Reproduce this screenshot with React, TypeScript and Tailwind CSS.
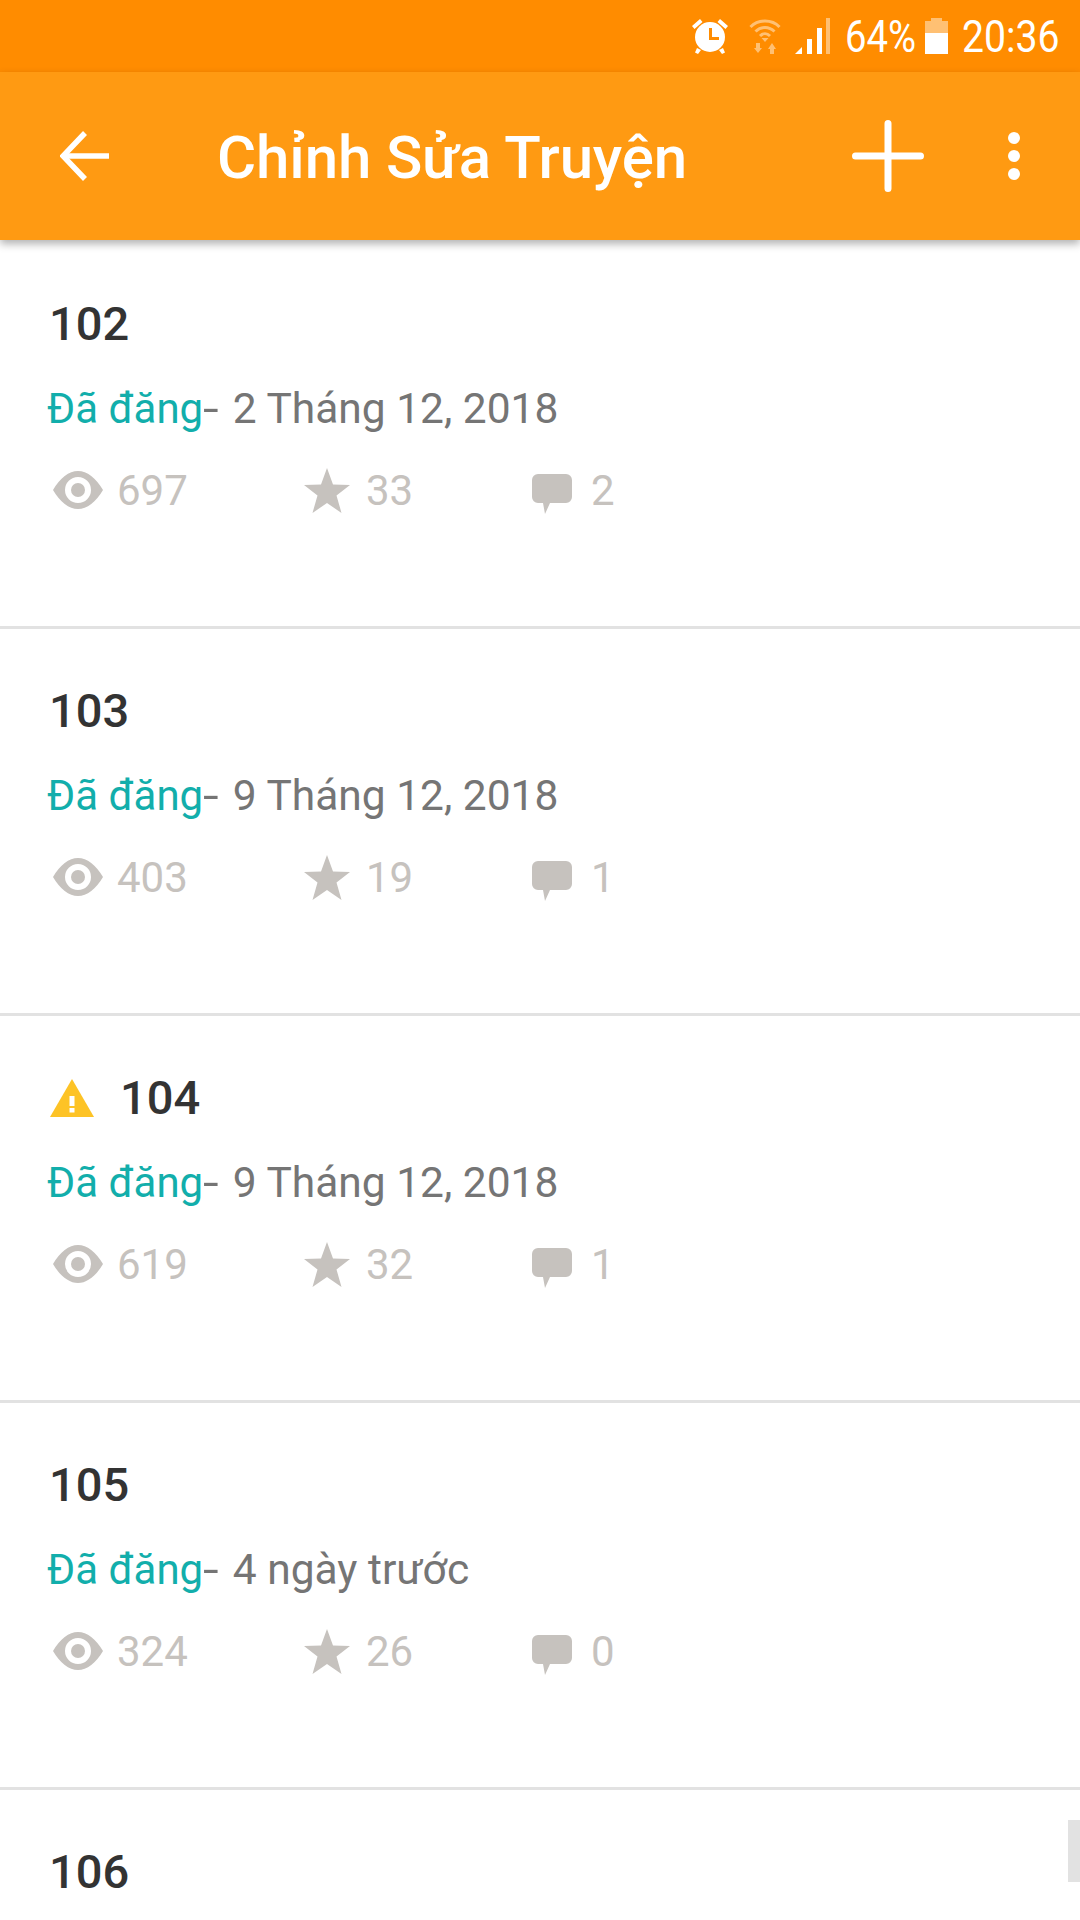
const parts = [
  { id: 102, views: 697, stars: 33, comments: 2, date: '2 Tháng 12, 2018' },
  { id: 103, views: 403, stars: 19, comments: 1, date: '9 Tháng 12, 2018' },
  { id: 104, views: 619, stars: 32, comments: 1, date: '9 Tháng 12, 2018', warning: true },
  { id: 105, views: 324, stars: 26, comments: 0, date: '4 ngày trước' },
  { id: 106 },
];

const AlarmIcon = () => (
  <svg width="36" height="36" viewBox="0 0 36 36" fill="white">
    <circle cx="18" cy="19" r="15" />
    <path d="M0 8 L8 1 L10.5 4 L2.5 11z M36 8 L28 1 L25.5 4 L33.5 11z M5 30 L9 32 L6 36 L3 34.5z M31 30 L27 32 L30 36 L33 34.5z" />
    <path d="M17 10 H20 V19 H27 V22 H17z" fill="#ff8c00" />
  </svg>
);

const WifiIcon = () => (
  <svg width="32" height="36" viewBox="0 0 32 36" fill="none" stroke="white" opacity="0.45">
    <path d="M1.5 9 C9 1 23 1 30.5 9" strokeWidth="3" />
    <path d="M6.5 13.5 C12 8 20 8 25.5 13.5" strokeWidth="3" />
    <path d="M11 18 C14 15 18 15 21 18" strokeWidth="3" />
    <path d="M16 24 L12.5 20 H19.5z M5 30 L9 35 L13 30z M19 31 L23 25 L27 31z" fill="white" stroke="none" />
    <rect x="7" y="25" width="4" height="6" fill="white" stroke="none" />
    <rect x="21" y="30" width="4" height="6" fill="white" stroke="none" />
  </svg>
);

const SignalIcon = () => (
  <svg width="36" height="36" viewBox="0 0 36 36" fill="white">
    <path d="M0 36 L7 29 V36z" />
    <rect x="12" y="21" width="5" height="15" />
    <rect x="22" y="10" width="5" height="26" />
    <rect x="31" y="0" width="4" height="36" opacity="0.45" />
  </svg>
);

const BatteryIcon = () => (
  <svg width="23" height="36" viewBox="0 0 23 36" fill="white">
    <path d="M6 0 H17 V3 H23 V15 H0 V3 H6z" opacity="0.45" />
    <rect x="0" y="15" width="23" height="21" />
  </svg>
);

const BackArrow = () => (
  <svg width="50" height="50" viewBox="0 0 50 50" fill="none" stroke="white" strokeWidth="5.5">
    <path d="M3 25 H49" />
    <path d="M25 2 L3 25 L25 48" />
  </svg>
);

const PlusIcon = () => (
  <svg width="72" height="72" viewBox="0 0 72 72" stroke="white" strokeWidth="7" strokeLinecap="round">
    <path d="M36 3.5 V68.5 M3.5 36 H68.5" />
  </svg>
);

const MoreIcon = () => (
  <svg width="12" height="48" viewBox="0 0 12 48" fill="white">
    <circle cx="6" cy="6" r="6" />
    <circle cx="6" cy="24" r="6" />
    <circle cx="6" cy="42" r="6" />
  </svg>
);

const EyeIcon = () => (
  <svg width="50" height="38" viewBox="0 0 50 38" fill="#c6c2be">
    <path
      fillRule="evenodd"
      d="M0 19 C7 7 16 0 25 0 S43 7 50 19 C43 31 34 38 25 38 S7 31 0 19z M25 6 A13 13 0 1 0 25 32 A13 13 0 1 0 25 6z"
    />
    <circle cx="25" cy="19" r="7" />
  </svg>
);

const StarIcon = () => (
  <svg width="46" height="45" viewBox="0 0 46 45" fill="#c6c2be">
    <path d="M23 0 L29 16.5 L46 17 L32.5 27.5 L37.5 45 L23 35 L8.5 45 L13.5 27.5 L0 17 L17 16.5z" />
  </svg>
);

const CommentIcon = () => (
  <svg width="40" height="40" viewBox="0 0 40 40" fill="#c6c2be" className="mt-[8px]">
    <path d="M6 0 H34 A6 6 0 0 1 40 6 V23 A6 6 0 0 1 34 29 H18 L13 40 L11 29 H6 A6 6 0 0 1 0 23 V6 A6 6 0 0 1 6 0z" />
  </svg>
);

const WarningIcon = () => (
  <svg width="44" height="38" viewBox="0 0 44 38">
    <path d="M22 0 L44 38 H0z" fill="#fdc326" />
    <rect x="19.5" y="17" width="5" height="10" fill="white" />
    <rect x="19.5" y="29" width="5" height="4.5" fill="white" />
  </svg>
);

const StatusBar = () => (
  <div className="h-[72px] bg-[#ff8c00] flex items-center justify-end pr-[22px] text-white text-[44px] leading-none">
    <AlarmIcon />
    <span className="ml-[21px]"><WifiIcon /></span>
    <span className="ml-[14px]"><SignalIcon /></span>
    <span className="ml-[14px] mt-[2px] w-[71px] origin-left scale-x-[0.87] whitespace-nowrap">64%</span>
    <span className="ml-[9px]"><BatteryIcon /></span>
    <span className="ml-[14px] mt-[2px] w-[96px] origin-left scale-x-[0.89] whitespace-nowrap">20:36</span>
  </div>
);

const Toolbar = () => (
  <div className="relative z-10 h-[168px] bg-[#ff9a12] flex items-center text-white shadow-[0_4px_8px_rgba(0,0,0,0.3)]">
    <span className="ml-[60px]"><BackArrow /></span>
    <h1 className="ml-[107px] mt-[3px] w-[470px] text-[60px] font-medium leading-none tracking-[-0.15px] whitespace-nowrap">
      Chỉnh Sửa Truyện
    </h1>
    <span className="ml-[165px]"><PlusIcon /></span>
    <span className="ml-[84px]"><MoreIcon /></span>
  </div>
);

const Stat = ({ icon, value, className, gap }: { icon: React.ReactNode; value?: number; className: string; gap: string }) => (
  <div className={`flex items-center ${className}`}>
    {icon}
    <span className={gap}>{value}</span>
  </div>
);

export default function App() {
  return (
    <div className="relative h-[1920px] w-[1080px] overflow-hidden bg-white font-['Roboto',sans-serif]">
      <StatusBar />
      <Toolbar />
      <div className="mt-[2px]">
        {parts.map((part) => (
          <div key={part.id} className="h-[387px] border-b-[3px] border-[#e2e2e2] pl-[48px] pt-[54px]">
            <div className="flex items-center h-[56px] pl-[1px] text-[47px] font-medium text-[#333333]">
              {part.warning && (
                <span className="ml-[1px] mr-[26px]"><WarningIcon /></span>
              )}
              {part.id}
            </div>
            {part.date && (
              <>
                <div className="mt-[32px] -ml-[1px] h-[50px] text-[42px] leading-[50px] text-[#757575] whitespace-nowrap">
                  <span className="text-[#12aeab]">Đã đăng</span>
                  <span className="inline-block origin-left scale-x-[1.35]">-</span>
                  <span className="ml-[18px] text-[42.5px]">{part.date}</span>
                </div>
                <div className="mt-[31px] flex items-center h-[50px] text-[42px] text-[#c6c2be]">
                  <Stat className="w-[256px] pl-[5px]" gap="ml-[14px]" icon={<EyeIcon />} value={part.views} />
                  <Stat className="w-[228px]" gap="ml-[16px]" icon={<StarIcon />} value={part.stars} />
                  <Stat className="" gap="ml-[19px]" icon={<CommentIcon />} value={part.comments} />
                </div>
              </>
            )}
          </div>
        ))}
      </div>
      {/* scroll thumb over the list */}
      <div className="absolute right-0 top-[1820px] h-[62px] w-[12px] bg-[#e2e2e2]" />
    </div>
  );
}
